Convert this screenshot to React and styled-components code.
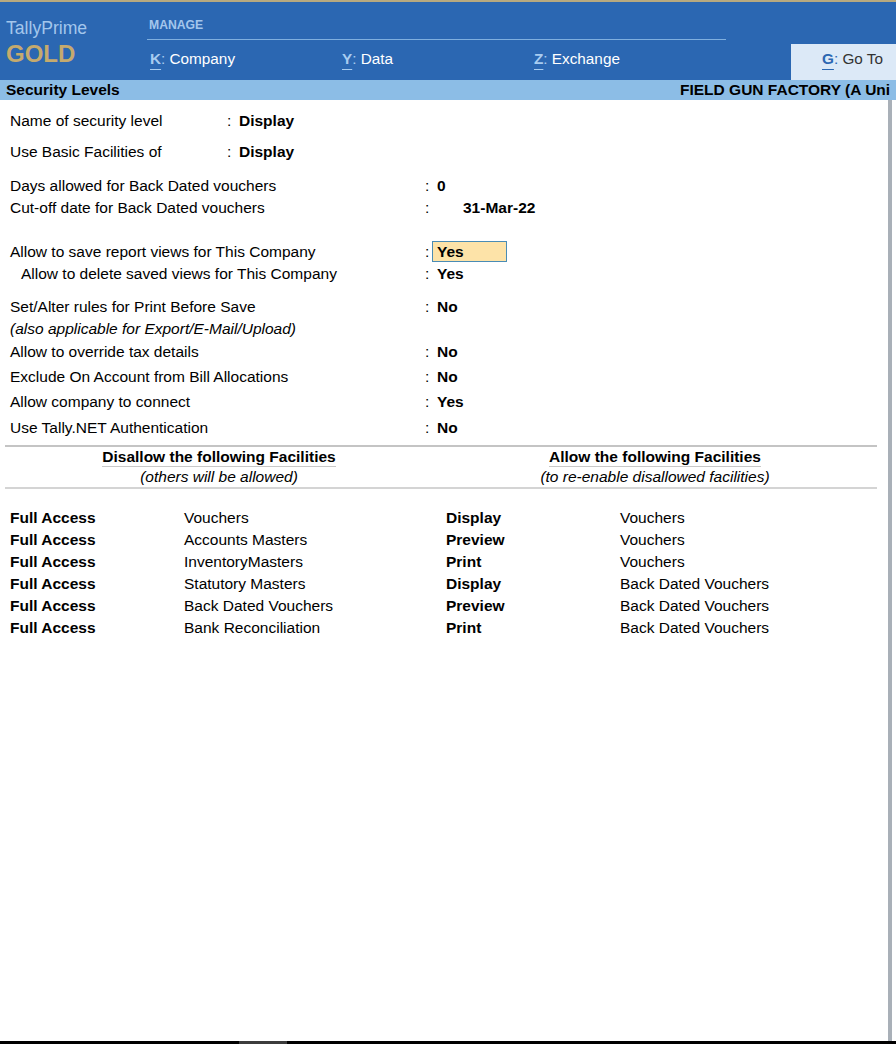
import React from "react";
import styled, { createGlobalStyle } from "styled-components";

const fields = [
  { label: "Name of security level", value: "Display", w: 217 },
  { label: "Use Basic Facilities of", value: "Display", w: 217, mt: 9 },
  { label: "Days allowed for Back Dated vouchers", value: "0", mt: 12 },
  { label: "Cut-off date for Back Dated vouchers", value: "31-Mar-22", offset: 26 },
  { label: "Allow to save report views for This Company", value: "Yes", mt: 22, active: true },
  { label: "Allow to delete saved views for This Company", value: "Yes", indent: 11 },
  { label: "Set/Alter rules for Print Before Save", value: "No", mt: 11 },
  { note: "(also applicable for Export/E-Mail/Upload)" },
  { label: "Allow to override tax details", value: "No", mt: 1 },
  { label: "Exclude On Account from Bill Allocations", value: "No", mt: 3 },
  { label: "Allow company to connect", value: "Yes", mt: 3 },
  { label: "Use Tally.NET Authentication", value: "No", mt: 4 },
];

const disallowed = [
  "Vouchers",
  "Accounts Masters",
  "InventoryMasters",
  "Statutory Masters",
  "Back Dated Vouchers",
  "Bank Reconciliation",
];

const allowed = [
  ["Display", "Vouchers"],
  ["Preview", "Vouchers"],
  ["Print", "Vouchers"],
  ["Display", "Back Dated Vouchers"],
  ["Preview", "Back Dated Vouchers"],
  ["Print", "Back Dated Vouchers"],
];

function App() {
  return (
    <Screen>
      <GlobalStyle />
      <TopStripe />
      <Header>
        <Brand>
          <ProductName>TallyPrime</ProductName>
          <Edition>GOLD</Edition>
        </Brand>
        <MenuArea>
          <MenuGroup>MANAGE</MenuGroup>
          <MenuRow>
            <MenuItem>
              <Key>K</Key>
              <KeyColon>:</KeyColon> Company
            </MenuItem>
            <MenuItem>
              <Key>Y</Key>
              <KeyColon>:</KeyColon> Data
            </MenuItem>
            <MenuItem>
              <Key>Z</Key>
              <KeyColon>:</KeyColon> Exchange
            </MenuItem>
          </MenuRow>
        </MenuArea>
        <GoTo>
          <Key $dark>G</Key>
          <KeyColon $dark>:</KeyColon>&nbsp;Go To
        </GoTo>
      </Header>
      <TitleBar>
        <span>Security Levels</span>
        <CompanyName>FIELD GUN FACTORY (A Uni</CompanyName>
      </TitleBar>
      <Body>
        <Main>
          {fields.map((f, i) =>
            f.note ? (
              <Note key={i}>{f.note}</Note>
            ) : (
              <Field key={i} $mt={f.mt}>
                <Label $w={f.w || 415} $indent={f.indent}>
                  {f.label}
                </Label>
                <Colon>:</Colon>
                {f.active ? (
                  <ActiveValue>{f.value}</ActiveValue>
                ) : (
                  <Value $offset={f.offset}>{f.value}</Value>
                )}
              </Field>
            )
          )}
          <SectionRule $mt={6} />
          <SectionHead>
            <HeadCell>
              <HeadTitle>Disallow the following Facilities</HeadTitle>
              <HeadNote>(others will be allowed)</HeadNote>
            </HeadCell>
            <HeadCell>
              <HeadTitle>Allow the following Facilities</HeadTitle>
              <HeadNote>(to re-enable disallowed facilities)</HeadNote>
            </HeadCell>
          </SectionHead>
          <SectionRule $light />
          <FacilityGrid>
            {disallowed.map((item, i) => (
              <React.Fragment key={i}>
                <Cell $bold>Full Access</Cell>
                <Cell>{item}</Cell>
                <Cell $bold>{allowed[i][0]}</Cell>
                <Cell>{allowed[i][1]}</Cell>
              </React.Fragment>
            ))}
          </FacilityGrid>
        </Main>
        <ScrollEdge />
      </Body>
      <StatusBar>
        <Thumb />
      </StatusBar>
    </Screen>
  );
}

export default App;

const GlobalStyle = createGlobalStyle`
  * {
    margin: 0;
    padding: 0;
    box-sizing: border-box;
  }

  body {
    font-family: "Liberation Sans", Arial, sans-serif;
    background: #fff;
    color: #000;
  }
`;

const Screen = styled.div`
  width: 896px;
  height: 1044px;
  display: flex;
  flex-direction: column;
  overflow: hidden;
`;

const TopStripe = styled.div`
  height: 2px;
  background: #b7a97f;
`;

// 상단 파란 헤더
const Header = styled.header`
  height: 78px;
  background: #2b67b2;
  display: flex;
`;

const Brand = styled.div`
  width: 147px;
  padding: 15px 0 0 6px;
`;

const ProductName = styled.div`
  font-size: 17.6px;
  line-height: 22px;
  color: #a3c6ec;
`;

const Edition = styled.div`
  margin-top: 1px;
  font-size: 24px;
  font-weight: bold;
  line-height: 28px;
  color: #c5aa6e;
`;

const MenuArea = styled.div`
  width: 579px;
`;

const MenuGroup = styled.div`
  padding: 15px 0 6px 2px;
  border-bottom: 1px solid #7fafdf;
  font-size: 12.2px;
  font-weight: bold;
  line-height: 16px;
  color: #a3c6ec;
`;

const MenuRow = styled.div`
  display: flex;
  margin-top: 9px;
  padding-left: 3px;
`;

const MenuItem = styled.div`
  width: 193px;
  font-size: 15.3px;
  line-height: 20px;
  color: #fff;
`;

const Key = styled.span`
  font-weight: bold;
  color: ${({ $dark }) => ($dark ? "#2b67b2" : "#a8ccf0")};
  text-decoration: underline;
  text-underline-offset: 5px;
  text-decoration-thickness: 1px;
`;

const KeyColon = styled.span`
  color: ${({ $dark }) => ($dark ? "#2b67b2" : "#a8ccf0")};
`;

const GoTo = styled.div`
  margin-left: auto;
  align-self: flex-end;
  width: 105px;
  height: 36px;
  background: #dce9f7;
  display: flex;
  align-items: center;
  padding: 0 0 6px 31px;
  font-size: 15.3px;
  color: #333;
  white-space: nowrap;
`;

const TitleBar = styled.div`
  height: 20px;
  background: #8cbde6;
  display: flex;
  justify-content: space-between;
  padding-left: 6px;
  font-size: 15.5px;
  font-weight: bold;
  line-height: 20px;
  white-space: nowrap;
`;

const CompanyName = styled.div`
  width: 216px;
`;

const Body = styled.div`
  flex: 1;
  display: flex;
`;

const Main = styled.main`
  flex: 1;
  padding: 10px 11px 0 5px;
  font-size: 15.5px;
`;

const ScrollEdge = styled.div`
  width: 4px;
  margin-right: 4px;
  background: #a9b0b8;
`;

const Field = styled.div`
  display: flex;
  margin-top: ${({ $mt }) => $mt || 0}px;
  padding-left: 5px;
  line-height: 22px;
  white-space: nowrap;
`;

const Label = styled.div`
  width: ${({ $w }) => $w}px;
  padding-left: ${({ $indent }) => $indent || 0}px;
`;

const Colon = styled.span`
  width: 12px;
`;

const Value = styled.div`
  margin-left: ${({ $offset }) => $offset || 0}px;
  font-weight: bold;
`;

const ActiveValue = styled.div`
  width: 75px;
  height: 21px;
  margin-left: -5px;
  padding-left: 4px;
  border: 1px solid #4a8cb5;
  background: #fde3a8;
  font-weight: bold;
  line-height: 19px;
`;

const Note = styled.div`
  padding-left: 5px;
  font-style: italic;
  line-height: 22px;
`;

const SectionRule = styled.div`
  height: 2px;
  margin-top: ${({ $mt }) => $mt || 0}px;
  background: ${({ $light }) => ($light ? "#d4d4d4" : "#c4c4c4")};
`;

const SectionHead = styled.div`
  display: grid;
  grid-template-columns: 428px 1fr;
  text-align: center;
`;

const HeadCell = styled.div`
  display: flex;
  flex-direction: column;
  align-items: center;
`;

const HeadTitle = styled.div`
  font-weight: bold;
  line-height: 19px;
  border-bottom: 1px solid #c8c8c8;
`;

const HeadNote = styled.div`
  font-style: italic;
  line-height: 20px;
`;

const FacilityGrid = styled.div`
  display: grid;
  grid-template-columns: 174px 262px 174px 1fr;
  margin-top: 18px;
  padding-left: 5px;
  line-height: 22px;
`;

const Cell = styled.div`
  font-weight: ${({ $bold }) => ($bold ? "bold" : "normal")};
  white-space: nowrap;
`;

const StatusBar = styled.div`
  height: 3px;
  background: #000;
  display: flex;
  padding-left: 239px;
`;

const Thumb = styled.div`
  width: 48px;
  background: #3c3c3c;
`;
